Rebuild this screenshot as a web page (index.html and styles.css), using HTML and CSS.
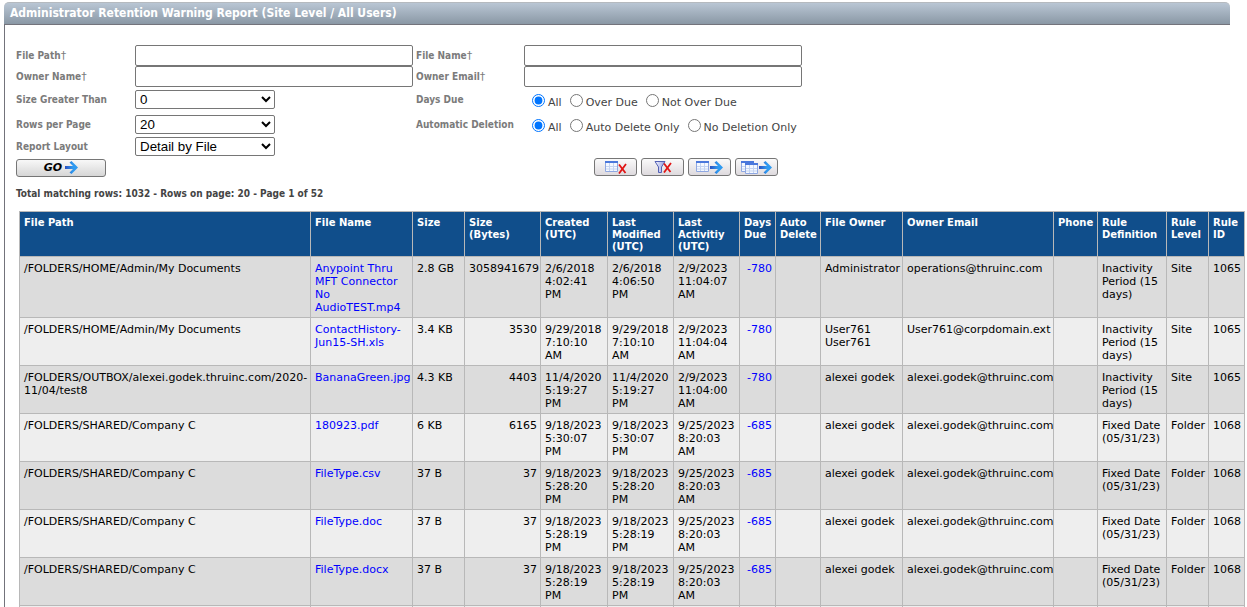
FILE: index.html
```html
<!DOCTYPE html>
<html lang="en">
<head>
    <meta charset="UTF-8">
    <meta name="viewport" content="width=device-width, initial-scale=1.0">
    <title>Administrator Retention Warning Report</title>
    <link rel="stylesheet" href="styles.css">
</head>
<body>
    <!-- shared icon shapes -->
    <svg class="defs" width="0" height="0" aria-hidden="true">
        <defs>
            <linearGradient id="arrow-fill" x1="0" x2="1">
                <stop offset="0" stop-color="#2a4fc0"/>
                <stop offset=".6" stop-color="#2f9af0"/>
            </linearGradient>
            <linearGradient id="funnel-fill" x1="0" x2="1">
                <stop offset="0" stop-color="#f4f6ff"/>
                <stop offset="1" stop-color="#8f9be0"/>
            </linearGradient>
            <symbol id="icon-arrow" viewBox="0 0 13 13">
                <path d="M0 5h8L4.500 1.500 6.500 0 13 6.500 6.500 13 4.500 11.500 8 8H0z" fill="url(#arrow-fill)"/>
            </symbol>
            <symbol id="icon-grid" viewBox="0 0 13 11">
                <path d="M.5 .5h12v10H.5z" fill="#f4f8ff" stroke="#8fa8e2"/>
                <path d="M0 0h13v2H0z" fill="#4a78dc"/>
                <path d="M1 5.500h11M1 8h11M4.500 2v8M8.500 2v8" stroke="#c4d4f2" fill="none"/>
            </symbol>
            <symbol id="icon-cross" viewBox="0 0 9 11">
                <path d="M1 1.500L7.500 10M8 1L1 10.500" stroke="#e01414" stroke-width="1.800" fill="none"/>
            </symbol>
        </defs>
    </svg>

    <div class="title-bar">
        <h1>Administrator Retention Warning Report (Site Level / All Users)</h1>
    </div>

    <div class="panel">
        <form class="filters">
            <label for="file-path">File Path<span class="dagger">†</span></label>
            <input type="text" id="file-path" name="file-path">
            <label for="file-name">File Name<span class="dagger">†</span></label>
            <input type="text" id="file-name" name="file-name">

            <label for="owner-name">Owner Name<span class="dagger">†</span></label>
            <input type="text" id="owner-name" name="owner-name">
            <label for="owner-email">Owner Email<span class="dagger">†</span></label>
            <input type="text" id="owner-email" name="owner-email">

            <label for="size">Size Greater Than</label>
            <select id="size" name="size">
                <option>0</option>
            </select>
            <span class="group-label" id="days-due">Days Due</span>
            <div class="radios" role="radiogroup" aria-labelledby="days-due">
                <label><input type="radio" name="due" checked>All</label>
                <label><input type="radio" name="due">Over Due</label>
                <label><input type="radio" name="due">Not Over Due</label>
            </div>

            <label for="rows">Rows per Page</label>
            <select id="rows" name="rows">
                <option>20</option>
            </select>
            <span class="group-label" id="auto-deletion">Automatic Deletion</span>
            <div class="radios" role="radiogroup" aria-labelledby="auto-deletion">
                <label><input type="radio" name="deletion" checked>All</label>
                <label><input type="radio" name="deletion">Auto Delete Only</label>
                <label><input type="radio" name="deletion">No Deletion Only</label>
            </div>

            <label for="layout">Report Layout</label>
            <select id="layout" name="layout">
                <option>Detail by File</option>
            </select>

            <button type="submit" class="btn go">GO <svg width="13" height="13"><use href="#icon-arrow"/></svg></button>
            <div class="toolbar">
                <button type="button" class="btn" aria-label="Clear report">
                    <svg width="22" height="14"><use href="#icon-grid" x="0" y="1" width="13" height="11"/><use href="#icon-cross" x="13" y="3" width="9" height="11"/></svg>
                </button>
                <button type="button" class="btn" aria-label="Clear filter">
                    <svg width="18" height="14"><path d="M1 1.500h10L7.500 7v5.500h-3V7z" fill="url(#funnel-fill)" stroke="#5360b4"/><use href="#icon-cross" x="9" y="2" width="9" height="11"/></svg>
                </button>
                <button type="button" class="btn" aria-label="Export page">
                    <svg width="28" height="14"><use href="#icon-grid" x="0" y="1" width="13" height="11"/><use href="#icon-arrow" x="14" y="1" width="13" height="13"/></svg>
                </button>
                <button type="button" class="btn" aria-label="Export all pages">
                    <svg width="32" height="14"><use href="#icon-grid" x="0" y="1" width="13" height="11"/><use href="#icon-grid" x="4" y="3" width="13" height="11"/><use href="#icon-arrow" x="18" y="1" width="13" height="13"/></svg>
                </button>
            </div>
        </form>

        <p class="summary">Total matching rows: 1032 - Rows on page: 20 - Page 1 of 52</p>

        <table class="report">
            <colgroup>
                <col>
                <col class="w-name">
                <col class="w-size">
                <col class="w-bytes">
                <col class="w-created">
                <col class="w-date">
                <col class="w-date">
                <col class="w-due">
                <col class="w-auto">
                <col class="w-owner">
                <col class="w-email">
                <col class="w-phone">
                <col class="w-rule">
                <col class="w-level">
                <col class="w-id">
            </colgroup>
            <thead>
                <tr>
                    <th>File Path</th>
                    <th>File Name</th>
                    <th>Size</th>
                    <th>Size<br>(Bytes)</th>
                    <th>Created (UTC)</th>
                    <th>Last Modified (UTC)</th>
                    <th>Last Activitiy (UTC)</th>
                    <th>Days Due</th>
                    <th>Auto Delete</th>
                    <th>File Owner</th>
                    <th>Owner Email</th>
                    <th>Phone</th>
                    <th>Rule Definition</th>
                    <th>Rule Level</th>
                    <th>Rule ID</th>
                </tr>
            </thead>
            <tbody>
                <tr>
                    <td>/FOLDERS/HOME/Admin/My Documents</td>
                    <td><a href="#">Anypoint Thru MFT Connector No AudioTEST.mp4</a></td>
                    <td>2.8 GB</td>
                    <td class="num">3058941679</td>
                    <td>2/6/2018 4:02:41 PM</td>
                    <td>2/6/2018 4:06:50 PM</td>
                    <td>2/9/2023 11:04:07 AM</td>
                    <td class="num"><a href="#">-780</a></td>
                    <td></td>
                    <td>Administrator</td>
                    <td>operations@thruinc.com</td>
                    <td></td>
                    <td>Inactivity Period (15 days)</td>
                    <td>Site</td>
                    <td>1065</td>
                </tr>
                <tr>
                    <td>/FOLDERS/HOME/Admin/My Documents</td>
                    <td><a href="#">ContactHistory-Jun15-SH.xls</a></td>
                    <td>3.4 KB</td>
                    <td class="num">3530</td>
                    <td>9/29/2018 7:10:10 AM</td>
                    <td>9/29/2018 7:10:10 AM</td>
                    <td>2/9/2023 11:04:04 AM</td>
                    <td class="num"><a href="#">-780</a></td>
                    <td></td>
                    <td>User761 User761</td>
                    <td>User761@corpdomain.ext</td>
                    <td></td>
                    <td>Inactivity Period (15 days)</td>
                    <td>Site</td>
                    <td>1065</td>
                </tr>
                <tr>
                    <td>/FOLDERS/OUTBOX/alexei.godek.thruinc.com/2020-<wbr>11/04/test8</td>
                    <td><a href="#">BananaGreen.jpg</a></td>
                    <td>4.3 KB</td>
                    <td class="num">4403</td>
                    <td>11/4/2020 5:19:27 PM</td>
                    <td>11/4/2020 5:19:27 PM</td>
                    <td>2/9/2023 11:04:00 AM</td>
                    <td class="num"><a href="#">-780</a></td>
                    <td></td>
                    <td>alexei godek</td>
                    <td>alexei.godek@thruinc.com</td>
                    <td></td>
                    <td>Inactivity Period (15 days)</td>
                    <td>Site</td>
                    <td>1065</td>
                </tr>
                <tr>
                    <td>/FOLDERS/SHARED/Company C</td>
                    <td><a href="#">180923.pdf</a></td>
                    <td>6 KB</td>
                    <td class="num">6165</td>
                    <td>9/18/2023 5:30:07 PM</td>
                    <td>9/18/2023 5:30:07 PM</td>
                    <td>9/25/2023 8:20:03 AM</td>
                    <td class="num"><a href="#">-685</a></td>
                    <td></td>
                    <td>alexei godek</td>
                    <td>alexei.godek@thruinc.com</td>
                    <td></td>
                    <td>Fixed Date (05/31/23)</td>
                    <td>Folder</td>
                    <td>1068</td>
                </tr>
                <tr>
                    <td>/FOLDERS/SHARED/Company C</td>
                    <td><a href="#">FileType.csv</a></td>
                    <td>37 B</td>
                    <td class="num">37</td>
                    <td>9/18/2023 5:28:20 PM</td>
                    <td>9/18/2023 5:28:20 PM</td>
                    <td>9/25/2023 8:20:03 AM</td>
                    <td class="num"><a href="#">-685</a></td>
                    <td></td>
                    <td>alexei godek</td>
                    <td>alexei.godek@thruinc.com</td>
                    <td></td>
                    <td>Fixed Date (05/31/23)</td>
                    <td>Folder</td>
                    <td>1068</td>
                </tr>
                <tr>
                    <td>/FOLDERS/SHARED/Company C</td>
                    <td><a href="#">FileType.doc</a></td>
                    <td>37 B</td>
                    <td class="num">37</td>
                    <td>9/18/2023 5:28:19 PM</td>
                    <td>9/18/2023 5:28:19 PM</td>
                    <td>9/25/2023 8:20:03 AM</td>
                    <td class="num"><a href="#">-685</a></td>
                    <td></td>
                    <td>alexei godek</td>
                    <td>alexei.godek@thruinc.com</td>
                    <td></td>
                    <td>Fixed Date (05/31/23)</td>
                    <td>Folder</td>
                    <td>1068</td>
                </tr>
                <tr>
                    <td>/FOLDERS/SHARED/Company C</td>
                    <td><a href="#">FileType.docx</a></td>
                    <td>37 B</td>
                    <td class="num">37</td>
                    <td>9/18/2023 5:28:19 PM</td>
                    <td>9/18/2023 5:28:19 PM</td>
                    <td>9/25/2023 8:20:03 AM</td>
                    <td class="num"><a href="#">-685</a></td>
                    <td></td>
                    <td>alexei godek</td>
                    <td>alexei.godek@thruinc.com</td>
                    <td></td>
                    <td>Fixed Date (05/31/23)</td>
                    <td>Folder</td>
                    <td>1068</td>
                </tr>
                <tr>
                    <td></td><td></td><td></td><td></td><td></td>
                    <td></td><td></td><td></td><td></td><td></td>
                    <td></td><td></td><td></td><td></td><td></td>
                </tr>
            </tbody>
        </table>
    </div>
</body>
</html>
```
FILE: styles.css
```css
* {
    box-sizing: border-box;
}
body {
    margin: 0;
    padding: 2px 2px 0 4px;
    background-color: #fff;
    font-family: Verdana, "DejaVu Sans", sans-serif;
    font-size: 11px;
    line-height: 13px;
    color: #000;
}
.defs {
    display: block;
}
.title-bar {
    height: 23px;
    margin-right: 15px;
    padding: 4px 6px;
    border-top: 1px solid #b5babf;
    border-bottom: 1px solid #73737b;
    border-radius: 5px 5px 0 0;
    background: linear-gradient(#b9c6d4, #8a98a5);
}
h1 {
    margin: 0;
    font-family: Tahoma, "DejaVu Sans Condensed", sans-serif;
    font-size: 12px;
    line-height: 13px;
    color: #fff;
}
.panel {
    border-left: 1px solid #73737b;
    padding: 20px 0 0 11px;
}
.filters {
    display: grid;
    grid-template-columns: 119px 281px 108px auto;
    grid-template-rows: 21px 21px 25px 25px 19px 23px;
    align-items: center;
    justify-content: start;
}
.filters > label, .group-label {
    font-family: Tahoma, "DejaVu Sans Condensed", sans-serif;
    font-size: 10px;
    font-weight: bold;
    color: #7b7b7b;
}
.dagger {
    font-family: Verdana, "DejaVu Sans", sans-serif;
    font-size: 11px;
    font-weight: normal;
}
input[type="text"] {
    width: 278px;
    height: 21px;
    margin: 0;
    border: 1px solid #767676;
    border-radius: 2px;
}
select {
    width: 140px;
    height: 19px;
    margin: 0;
    padding: 0;
    border: 1px solid #767676;
    border-radius: 2px;
    background-color: #fff;
    font-family: Arial, "Liberation Sans", sans-serif;
    color: #000;
}
.radios {
    display: flex;
    gap: 8px;
    padding: 6px 0 0 8px;
    color: #444;
}
.radios label {
    display: flex;
}
.radios input {
    width: 13px;
    height: 13px;
    margin: -2px 3px 2px 0;
}
.btn {
    display: flex;
    align-items: center;
    justify-content: center;
    width: 43px;
    height: 18px;
    padding: 0;
    border: 1px solid #767676;
    border-radius: 3px;
    background: linear-gradient(#f8f8f8, #d6d6d6);
}
.go {
    grid-column: 1;
    gap: 3px;
    width: 90px;
    font-family: Verdana, "DejaVu Sans", sans-serif;
    font-size: 11px;
    font-weight: bold;
    font-style: italic;
    color: #000;
}
.toolbar {
    grid-column: 4;
    display: flex;
    gap: 4px;
    padding: 0 0 2px 70px;
}
.toolbar .btn {
    background: linear-gradient(#fafafa, #dedade);
}
.summary {
    margin: 8px 0 11px;
    font-family: Tahoma, "DejaVu Sans Condensed", sans-serif;
    font-size: 10px;
    font-weight: bold;
    color: #444;
}
.report {
    width: calc(100% - 3px);
    margin-left: 3px;
    border-collapse: collapse;
    table-layout: fixed;
}
.w-name { width: 102px; }
.w-size { width: 52px; }
.w-bytes { width: 76px; }
.w-created { width: 67px; }
.w-date { width: 66px; }
.w-due { width: 36px; }
.w-auto { width: 45px; }
.w-owner { width: 82px; }
.w-email { width: 151px; }
.w-phone { width: 44px; }
.w-rule { width: 69px; }
.w-level { width: 42px; }
.w-id { width: 36px; }
th, td {
    padding: 5px 2px 3px 4px;
    border: 1px solid #b8b8b8;
    text-align: left;
    vertical-align: top;
}
th {
    background-color: #104e8b;
    font-size: 10px;
    line-height: 12px;
    color: #fff;
}
tr:nth-child(odd) td {
    background-color: #dcdcdc;
}
tr:nth-child(even) td {
    background-color: #eee;
}
td.num {
    padding-right: 3px;
    text-align: right;
}
td a {
    color: #00f;
    text-decoration: none;
}
```
